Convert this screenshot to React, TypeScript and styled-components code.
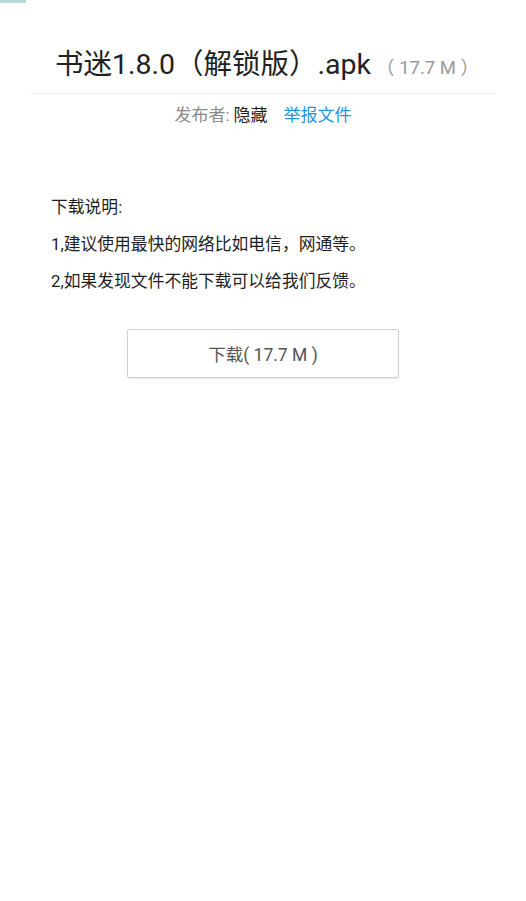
import React from "react";
import styled, { createGlobalStyle } from "styled-components";

const GlobalStyle = createGlobalStyle`
    html, body {
        margin: 0;
        padding: 0;
        background: #ffffff;
    }
    body {
        font-family: Roboto, "Noto Sans CJK SC", sans-serif;
        color: #222;
    }
`;

const file = {
    name: "书迷1.8.0（解锁版）.apk",
    size: "17.7 M",
    publisher: "隐藏",
};

const notes = [
    "下载说明:",
    "1,建议使用最快的网络比如电信，网通等。",
    "2,如果发现文件不能下载可以给我们反馈。",
];

const App: React.FC = () => {
    return (
        <>
            <GlobalStyle />
            <Page>
                <TopMark />
                <Header>
                    <Title>
                        {file.name}
                        <Size>（ {file.size} ）</Size>
                    </Title>
                </Header>
                <Meta>
                    <MetaLabel>发布者:</MetaLabel>
                    <MetaValue>{file.publisher}</MetaValue>
                    <ReportLink href="#">举报文件</ReportLink>
                </Meta>
                <Notes>
                    {notes.map((line) => (
                        <NoteLine key={line}>{line}</NoteLine>
                    ))}
                </Notes>
                <ButtonRow>
                    <DownloadButton>下载( {file.size} )</DownloadButton>
                </ButtonRow>
            </Page>
        </>
    );
};

export default App;

const Page = styled.div`
    width: 526px;
    min-height: 901px;
    background: #fff;
    display: flex;
    flex-direction: column;
`;

const TopMark = styled.div`
    width: 26px;
    height: 3px;
    background: #b7dadb;
`;

const Header = styled.div`
    margin: 0 30px 0 31px;
    padding: 45px 0 8px 7px;
    border-bottom: 1px solid #ececec;
    text-align: center;
`;

const Title = styled.h1`
    margin: 0;
    font-size: 28.5px;
    font-weight: normal;
    line-height: 34px;
    color: #222;
`;

const Size = styled.span`
    font-size: 18.5px;
    color: #999;
    margin-left: 5px;
`;

const Meta = styled.div`
    display: flex;
    justify-content: center;
    align-items: center;
    margin-top: 10px;
    font-size: 17px;
    line-height: 22px;
`;

const MetaLabel = styled.span`
    color: #8a8a8a;
    margin-right: 4px;
`;

const MetaValue = styled.span`
    color: #222;
    margin-right: 16px;
`;

const ReportLink = styled.a`
    color: #1f95e0;
    text-decoration: none;
`;

const Notes = styled.div`
    padding: 63px 51px 0;
    display: flex;
    flex-direction: column;
`;

const NoteLine = styled.p`
    margin: 0;
    font-size: 16.8px;
    line-height: 37px;
    color: #1e1e1e;
`;

const ButtonRow = styled.div`
    display: flex;
    justify-content: center;
    padding-top: 29px;
`;

const DownloadButton = styled.button`
    width: 272px;
    height: 49px;
    background: #fff;
    border: 1px solid #cfcfcf;
    border-radius: 2px;
    box-shadow: 0 1px 1px rgba(0, 0, 0, 0.08);
    font-family: Roboto, "Noto Sans CJK SC", sans-serif;
    font-size: 17.5px;
    color: #555;
    cursor: pointer;
`;
